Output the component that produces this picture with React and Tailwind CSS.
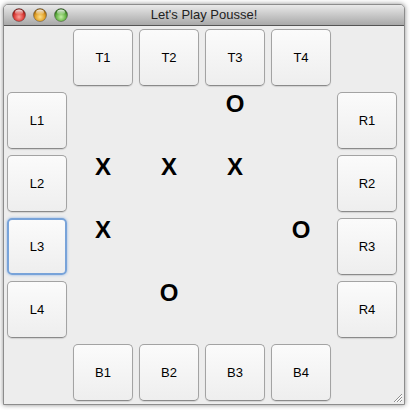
import { Fragment } from 'react';

const board = [
  ['', '', 'O', ''],
  ['X', 'X', 'X', ''],
  ['X', '', '', 'O'],
  ['', 'O', '', ''],
];

function Light({ id, base, dark, light }) {
  return (
    <svg width="14" height="14" viewBox="0 0 14 14">
      <defs>
        <radialGradient id={`g-${id}`} cx="50%" cy="65%" r="60%">
          <stop offset="0%" stopColor={light} />
          <stop offset="60%" stopColor={base} />
          <stop offset="100%" stopColor={dark} />
        </radialGradient>
        <linearGradient id={`h-${id}`} x1="0" y1="0" x2="0" y2="1">
          <stop offset="0%" stopColor="#fff" stopOpacity="0.9" />
          <stop offset="100%" stopColor="#fff" stopOpacity="0" />
        </linearGradient>
      </defs>
      <circle cx="7" cy="7" r="6.5" fill={`url(#g-${id})`} stroke="#00000055" strokeWidth="0.8" />
      <ellipse cx="7" cy="4.2" rx="4" ry="2.6" fill={`url(#h-${id})`} />
    </svg>
  );
}

function Btn({ label, focused }) {
  return (
    <button
      className={`w-[60px] h-[57px] rounded-[5px] bg-gradient-to-b from-[#fbfbfb] to-[#eeeeee] text-[13px] text-black ${
        focused
          ? 'border-2 border-[#78a3d9] shadow-[0_0_3px_#8fb4e4]'
          : 'border border-[#a3a3a3] border-b-[#8a8a8a] shadow-[0_1px_1px_rgba(0,0,0,0.12)]'
      }`}
    >
      {label}
    </button>
  );
}

function Cell({ value }) {
  return (
    <div className="w-[60px] h-[57px] flex justify-center">
      <span className="text-[24px] leading-[24px] font-bold text-black">{value}</span>
    </div>
  );
}

export default function App() {
  return (
    <div className="w-[410px] h-[410px] bg-white pl-[3px] pt-[4px]" style={{ fontFamily: '"Liberation Sans", Arial, sans-serif' }}>
      <div className="w-[402px] h-[401px] flex flex-col rounded-t-[5px] border border-[#8c8c8c] bg-[#ededed] shadow-[0_0_5px_rgba(0,0,0,0.45)] overflow-hidden">
        {/* Title bar */}
        <div className="h-[21px] shrink-0 flex items-center relative bg-gradient-to-b from-[#e9e9e9] to-[#a9a9a9] border-b border-[#555]">
          <div className="flex gap-[7px] pl-[8px]">
            <Light id="r" base="#dd3f3a" dark="#8e1a16" light="#f9a39c" />
            <Light id="y" base="#e3a229" dark="#95600d" light="#fbe08c" />
            <Light id="g" base="#68b548" dark="#2c6b1a" light="#c4efa6" />
          </div>
          <span className="absolute left-0 right-0 text-center text-[13px] text-[#222] pointer-events-none">
            Let's Play Pousse!
          </span>
        </div>

        {/* Board */}
        <div className="relative flex-1 pl-[3px] pt-[3px]">
          <div className="grid grid-cols-[repeat(6,60px)] grid-rows-[repeat(6,57px)] gap-[6px]">
            <div />
            {['T1', 'T2', 'T3', 'T4'].map((l) => (
              <Btn key={l} label={l} />
            ))}
            <div />
            {board.map((row, r) => (
              <Fragment key={r}>
                <Btn label={`L${r + 1}`} focused={r === 2} />
                {row.map((v, c) => (
                  <Cell key={c} value={v} />
                ))}
                <Btn label={`R${r + 1}`} />
              </Fragment>
            ))}
            <div />
            {['B1', 'B2', 'B3', 'B4'].map((l) => (
              <Btn key={l} label={l} />
            ))}
            <div />
          </div>

          {/* resize grip */}
          <svg className="absolute right-[1px] bottom-[1px]" width="11" height="11" viewBox="0 0 11 11">
            <path d="M10 2 L2 10 M10 5 L5 10 M10 8 L8 10" stroke="#8d8d8d" strokeWidth="1" />
            <path d="M10 3 L3 10 M10 6 L6 10 M10 9 L9 10" stroke="#ffffff" strokeWidth="1" />
          </svg>
        </div>
      </div>
    </div>
  );
}
